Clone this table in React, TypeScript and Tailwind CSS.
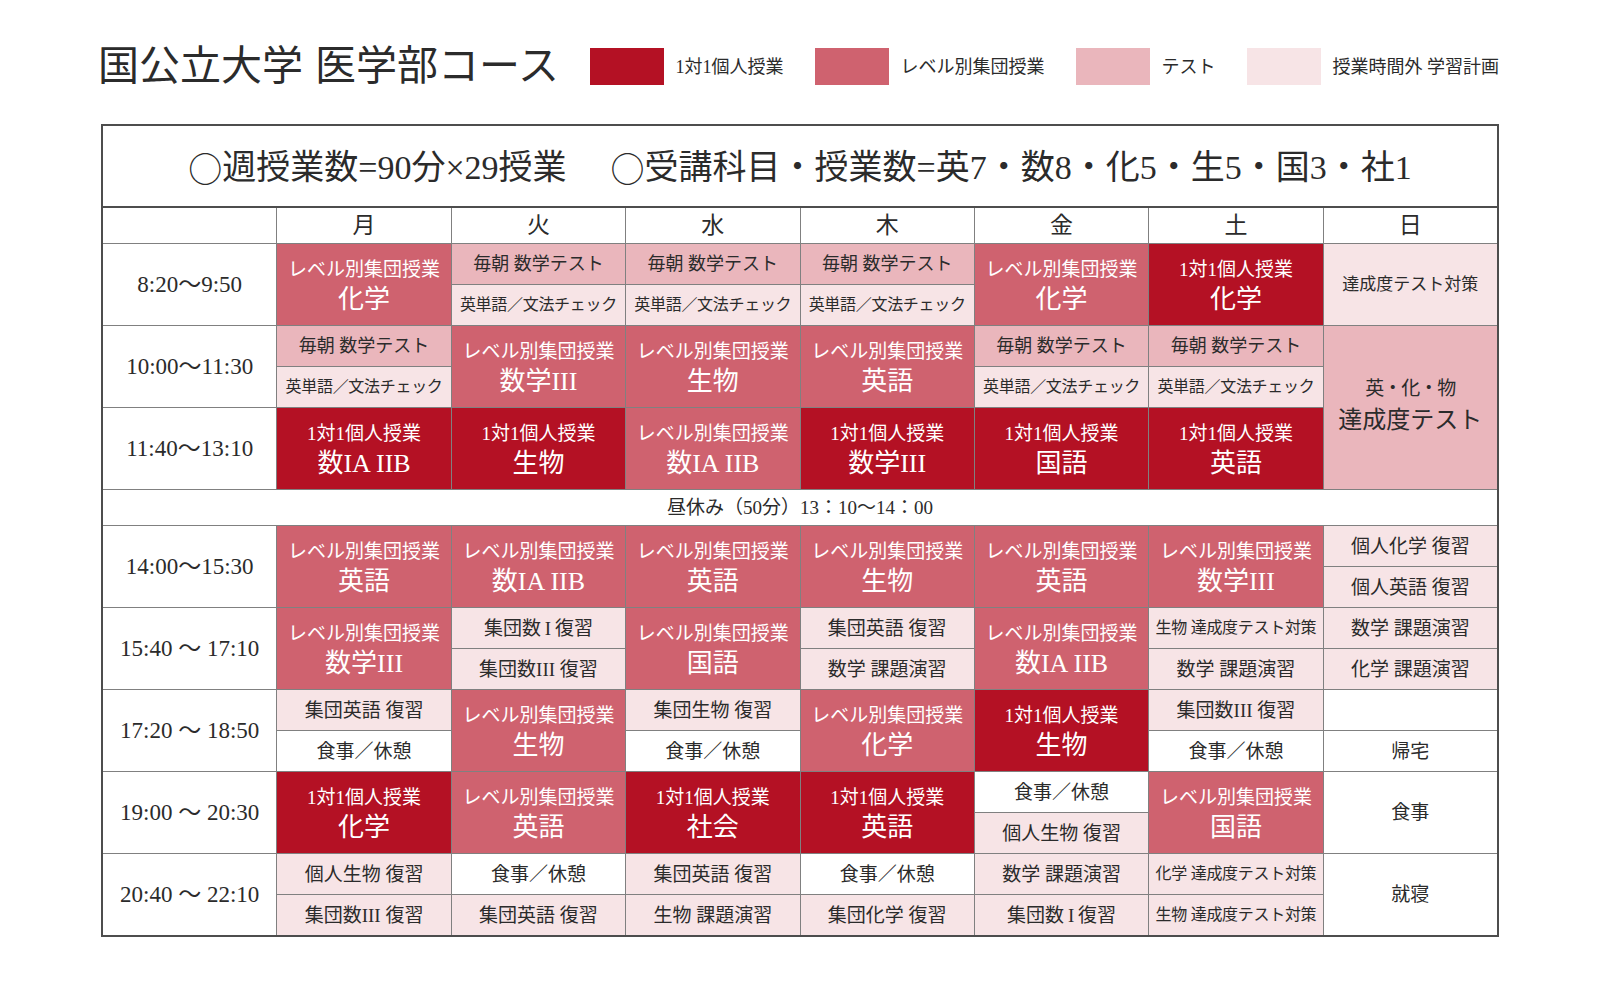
import React from 'react';

type Kind = 'solo' | 'group' | 'test' | 'self' | 'none';

type Lesson = { t: 'lesson'; kind: 'solo' | 'group'; subject: string };
type Note = { t: 'note'; kind: Kind; text: string; size: string };
type Merged = { t: 'merged' };
type Day = Lesson | Note | Merged | [Note, Note] | null;

const tone: Record<Kind, string> = {
  solo: 'bg-[#b41124] text-white',
  group: 'bg-[#cf626f] text-white',
  test: 'bg-[#eab6bc] text-[#2b2b2b]',
  self: 'bg-[#f7e4e6] text-[#2b2b2b]',
  none: 'bg-white text-[#2b2b2b]',
};

const label: Record<'solo' | 'group', string> = {
  solo: '1対1個人授業',
  group: 'レベル別集団授業',
};

const solo = (subject: string): Lesson => ({ t: 'lesson', kind: 'solo', subject });
const group = (subject: string): Lesson => ({ t: 'lesson', kind: 'group', subject });
const note = (kind: Kind, text: string, size = 'text-[19px]'): Note => ({ t: 'note', kind, text, size });

const MATH12 = '数IA\u2009IIB';
const MATH3 = '数学III';
const small = 'text-[16px] tracking-[-0.3px]';

// morning test + vocabulary check pair
const morning = (): [Note, Note] => [
  note('test', '毎朝 数学テスト', 'text-[18px]'),
  note('self', '英単語／文法チェック', 'text-[16px] tracking-[-0.3px]'),
];
const meal = note('none', '食事／休憩');

const periods: { time: string; days: Day[] }[] = [
  {
    time: '8:20～9:50',
    days: [group('化学'), morning(), morning(), morning(), group('化学'), solo('化学'), note('self', '達成度テスト対策', 'text-[17px]')],
  },
  {
    time: '10:00～11:30',
    days: [morning(), group(MATH3), group('生物'), group('英語'), morning(), morning(), { t: 'merged' }],
  },
  {
    time: '11:40～13:10',
    days: [solo(MATH12), solo('生物'), group(MATH12), solo(MATH3), solo('国語'), solo('英語'), null],
  },
];

const afternoon: { time: string; days: Day[] }[] = [
  {
    time: '14:00～15:30',
    days: [
      group('英語'), group(MATH12), group('英語'), group('生物'), group('英語'), group(MATH3),
      [note('self', '個人化学 復習'), note('self', '個人英語 復習')],
    ],
  },
  {
    time: '15:40 ～ 17:10',
    days: [
      group(MATH3),
      [note('self', '集団数\u2009I\u2009復習'), note('self', '集団数III 復習')],
      group('国語'),
      [note('self', '集団英語 復習'), note('self', '数学 課題演習')],
      group(MATH12),
      [note('self', '生物 達成度テスト対策', small), note('self', '数学 課題演習')],
      [note('self', '数学 課題演習'), note('self', '化学 課題演習')],
    ],
  },
  {
    time: '17:20 ～ 18:50',
    days: [
      [note('self', '集団英語 復習'), meal],
      group('生物'),
      [note('self', '集団生物 復習'), meal],
      group('化学'),
      solo('生物'),
      [note('self', '集団数III 復習'), meal],
      [note('none', ''), note('none', '帰宅')],
    ],
  },
  {
    time: '19:00 ～ 20:30',
    days: [
      solo('化学'), group('英語'), solo('社会'), solo('英語'),
      [meal, note('self', '個人生物 復習')],
      group('国語'),
      note('none', '食事'),
    ],
  },
  {
    time: '20:40 ～ 22:10',
    days: [
      [note('self', '個人生物 復習'), note('self', '集団数III 復習')],
      [meal, note('self', '集団英語 復習')],
      [note('self', '集団英語 復習'), note('self', '生物 課題演習')],
      [meal, note('self', '集団化学 復習')],
      [note('self', '数学 課題演習'), note('self', '集団数\u2009I\u2009復習')],
      [note('self', '化学 達成度テスト対策', small), note('self', '生物 達成度テスト対策', small)],
      note('none', '就寝'),
    ],
  },
];

const legend = [
  { color: 'bg-[#b41124]', text: '1対1個人授業' },
  { color: 'bg-[#cf626f]', text: 'レベル別集団授業' },
  { color: 'bg-[#eab6bc]', text: 'テスト' },
  { color: 'bg-[#f7e4e6]', text: '授業時間外 学習計画' },
];

const weekdays = ['月', '火', '水', '木', '金', '土', '日'];

function NoteCell({ n, full }: { n: Note; full?: boolean }) {
  return (
    <div className={`${tone[n.kind]} ${full ? 'row-span-2' : ''} flex items-center justify-center leading-none whitespace-nowrap ${n.size}`}>
      {n.text}
    </div>
  );
}

function LessonCell({ l }: { l: Lesson }) {
  return (
    <div className={`${tone[l.kind]} row-span-2 flex flex-col items-center justify-center gap-[8px] pt-[3px] leading-none whitespace-nowrap`}>
      <span className="text-[19px]">{label[l.kind]}</span>
      <span className="text-[26px]">{l.subject}</span>
    </div>
  );
}

function renderPeriod(p: { time: string; days: Day[] }) {
  const cells: React.ReactNode[] = [
    <div key={p.time} className="row-span-2 bg-white flex items-center justify-center text-[23px] leading-none whitespace-nowrap">
      {p.time}
    </div>,
  ];
  p.days.forEach((d, i) => {
    const key = `${p.time}-${i}`;
    if (d === null) return;
    if (Array.isArray(d)) {
      cells.push(<NoteCell key={key} n={d[0]} />);
    } else if (d.t === 'lesson') {
      cells.push(<LessonCell key={key} l={d} />);
    } else if (d.t === 'note') {
      cells.push(<NoteCell key={key} n={d} full />);
    } else {
      cells.push(
        <div key={key} className="row-span-4 bg-[#eab6bc] text-[#2b2b2b] flex flex-col items-center justify-center gap-[10px] pb-[4px] leading-none">
          <span className="text-[19px] tracking-[-1px]">英・化・物</span>
          <span className="text-[24px]">達成度テスト</span>
        </div>
      );
    }
  });
  p.days.forEach((d, i) => {
    if (Array.isArray(d)) cells.push(<NoteCell key={`${p.time}-${i}-b`} n={d[1]} />);
  });
  return cells;
}

const circle = <span className="font-['Noto_Sans_CJK_JP',sans-serif]">○</span>;

export default function App() {
  return (
    <div className="w-[1600px] h-[1000px] bg-white pt-[48px] pl-[101px] text-[#2b2b2b] font-['Liberation_Serif','Noto_Sans_CJK_JP',serif]">
      {/* Header: title + legend */}
      <div className="w-[1398px] h-[37px] flex items-center justify-between">
        <h1 className="-ml-[3px] text-[41px] leading-none whitespace-nowrap">
          国公立大学<span className="inline-block w-[12px]" />医学部コース
        </h1>
        <div className="flex items-center gap-[31px]">
          {legend.map((l) => (
            <div key={l.text} className="flex items-center gap-[12px]">
              <span className={`w-[74px] h-[37px] ${l.color}`} />
              <span className="text-[18px] leading-none whitespace-nowrap">{l.text}</span>
            </div>
          ))}
        </div>
      </div>

      {/* Timetable */}
      <div className="mt-[39px] w-[1398px] border-2 border-[#4d4d4d]">
        <div className="h-[82px] border-b-2 border-[#4d4d4d] flex items-center justify-center pt-[3px] text-[34px] leading-none whitespace-nowrap">
          {circle}週授業数=90分×29授業<span className="inline-block w-[44px]" />
          {circle}受講科目・授業数=英7・数8・化5・生5・国3・社1
        </div>
        <div className="grid grid-cols-8 grid-rows-[35px_repeat(6,40px)_35px_repeat(10,40px)] gap-px bg-[#808080]">
          <div className="bg-white" />
          {weekdays.map((w) => (
            <div key={w} className="bg-white flex items-center justify-center text-[23px] leading-none">
              {w}
            </div>
          ))}
          {periods.map(renderPeriod)}
          <div className="col-span-8 bg-white flex items-center justify-center text-[19px] leading-none whitespace-nowrap">
            昼休み（50分）13：10～14：00
          </div>
          {afternoon.map(renderPeriod)}
        </div>
      </div>
    </div>
  );
}
